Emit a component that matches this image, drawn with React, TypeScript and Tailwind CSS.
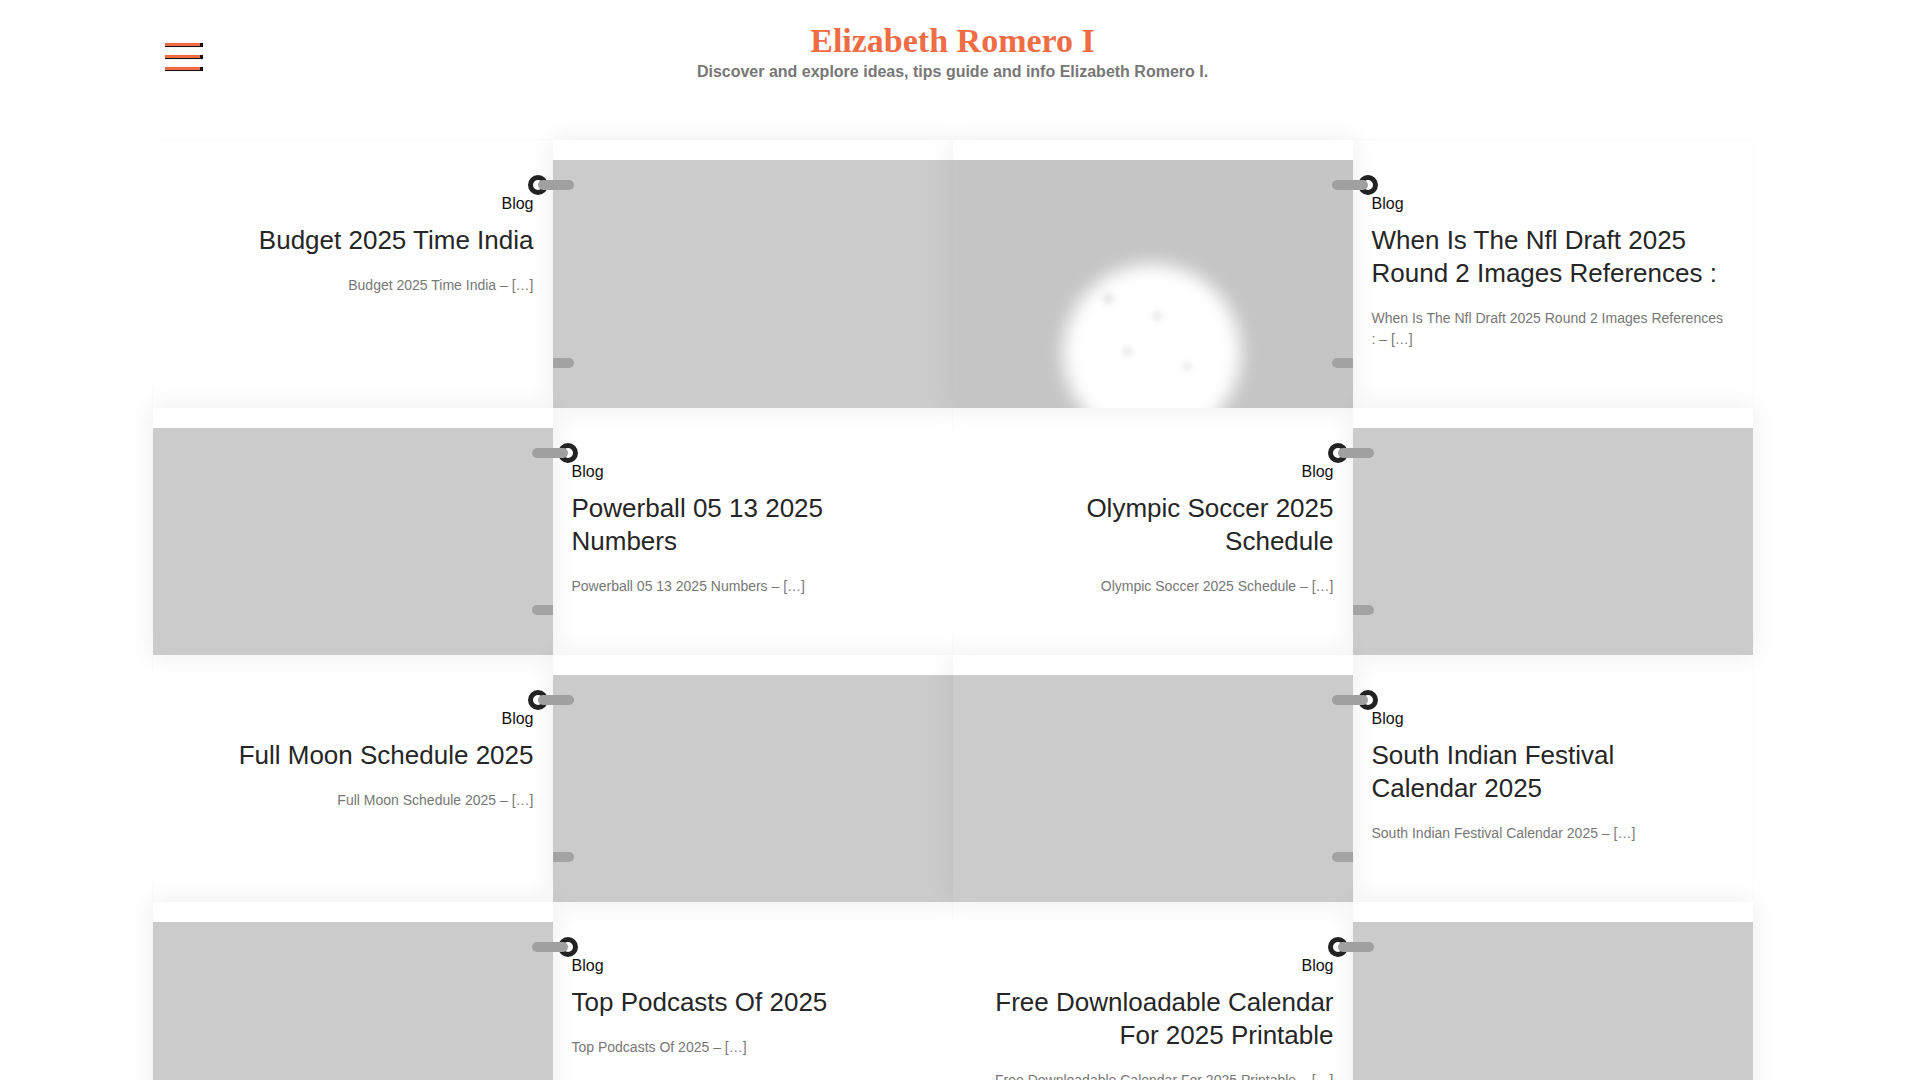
import clsx from 'clsx'

type Post = { title: string; excerpt: string; textFirst: boolean; ball?: boolean }

const rows: Post[][] = [
  [
    { title: 'Budget 2025 Time India', excerpt: 'Budget 2025 Time India', textFirst: true },
    { title: 'When Is The Nfl Draft 2025 Round 2 Images References :', excerpt: 'When Is The Nfl Draft 2025 Round 2 Images References :', textFirst: false, ball: true },
  ],
  [
    { title: 'Powerball 05 13 2025 Numbers', excerpt: 'Powerball 05 13 2025 Numbers', textFirst: false },
    { title: 'Olympic Soccer 2025 Schedule', excerpt: 'Olympic Soccer 2025 Schedule', textFirst: true },
  ],
  [
    { title: 'Full Moon Schedule 2025', excerpt: 'Full Moon Schedule 2025', textFirst: true },
    { title: 'South Indian Festival Calendar 2025', excerpt: 'South Indian Festival Calendar 2025', textFirst: false },
  ],
  [
    { title: 'Top Podcasts Of 2025', excerpt: 'Top Podcasts Of 2025', textFirst: false },
    { title: 'Free Downloadable Calendar For 2025 Printable', excerpt: 'Free Downloadable Calendar For 2025 Printable', textFirst: true },
  ],
]

const Pin = ({ right }: { right: boolean }): React.ReactElement => (
  <>
    <span
      className={clsx(
        'absolute top-[35px] z-20 h-[20px] w-[20px] rounded-full border-[5px] border-[#222] bg-white',
        right ? 'right-[5px]' : 'left-[5px]'
      )}
    />
    <span
      className={clsx(
        'absolute top-[40px] z-20 h-[10px] w-[36px] rounded-full bg-[#a0a0a0]',
        right ? 'right-[-21px]' : 'left-[-21px]'
      )}
    />
  </>
)

const TextCell = ({ p }: { p: Post }): React.ReactElement => (
  <div
    className={clsx(
      'relative bg-white pt-[52px] pb-[58px] shadow-[0_0_2px_rgba(0,0,0,0.05)]',
      p.textFirst ? 'pl-[29px] pr-[19px] text-right' : 'pl-[19px] pr-[29px] text-left'
    )}
  >
    <Pin right={p.textFirst} />
    <div className="text-[16px] leading-[24px] text-[#111]">Blog</div>
    <h2 className="mt-[8px] text-[26px] leading-[33px] text-[#262626]">{p.title}</h2>
    <p className="mt-[18px] text-[14px] leading-[21px] text-[#777]">{p.excerpt} – […]</p>
  </div>
)

const ImageCell = ({ p }: { p: Post }): React.ReactElement => (
  <div className="relative z-10 flex flex-col bg-white pt-[20px] shadow-[0_0_25px_rgba(0,0,0,0.08)]">
    <div className={clsx('relative flex-1 overflow-hidden', p.ball ? 'bg-[#c5c5c5]' : 'bg-[#cbcbcb]')}>
      {p.ball && (
        <>
          <div className="absolute left-[110px] top-[104px] h-[178px] w-[178px] rounded-full bg-white blur-[9px]" />
          <div className="absolute left-[150px] top-[134px] h-[10px] w-[10px] rounded-full bg-[#e2e2e2] blur-[3px]" />
          <div className="absolute left-[200px] top-[152px] h-[8px] w-[8px] rounded-full bg-[#e2e2e2] blur-[3px]" />
          <div className="absolute left-[170px] top-[187px] h-[9px] w-[9px] rounded-full bg-[#e6e6e6] blur-[3px]" />
          <div className="absolute left-[230px] top-[202px] h-[8px] w-[8px] rounded-full bg-[#e6e6e6] blur-[3px]" />
        </>
      )}
    </div>
    <span
      className={clsx(
        'absolute bottom-[40px] h-[10px] w-[21px] bg-[#a3a3a3]',
        p.textFirst ? 'left-0 rounded-r-full' : 'right-0 rounded-l-full'
      )}
    />
  </div>
)

const Hamburger = (): React.ReactElement => (
  <div className="ml-[12px] mt-[22px] flex w-[38px] flex-col gap-[8px]">
    {[0, 1, 2].map(i => (
      <div key={i} className="h-[4px] w-[38px] bg-[#111] shadow-[0_0_2px_rgba(0,0,0,0.15)]">
        <div className="h-[2.5px] w-[35px] bg-[#ef6c45]" />
      </div>
    ))}
  </div>
)

const App = (): React.ReactElement => (
  <div className="min-h-screen w-[1905px] bg-white pb-[40px] font-['Liberation_Sans',Arial,sans-serif]">
    <header className="mx-auto grid w-[1600px] grid-cols-[1fr_auto_1fr] pt-[21px]">
      <Hamburger />
      <div className="text-center">
        <h1 className="font-['Liberation_Serif','Times_New_Roman',serif] text-[34px] font-bold leading-[40px] text-[#ef6c45]">
          Elizabeth Romero I
        </h1>
        <p className="mt-[1px] text-[16px] font-bold leading-[20px] text-[#777]">
          Discover and explore ideas, tips guide and info Elizabeth Romero I.
        </p>
      </div>
      <div />
    </header>
    <main className="mx-auto mt-[58px] w-[1600px]">
      {rows.map((row, ri) => (
        <div key={ri} className="grid grid-cols-4">
          {row.map((p, pi) =>
            p.textFirst ? (
              <div key={pi} className="contents">
                <TextCell p={p} />
                <ImageCell p={p} />
              </div>
            ) : (
              <div key={pi} className="contents">
                <ImageCell p={p} />
                <TextCell p={p} />
              </div>
            )
          )}
        </div>
      ))}
    </main>
  </div>
)

export default App
